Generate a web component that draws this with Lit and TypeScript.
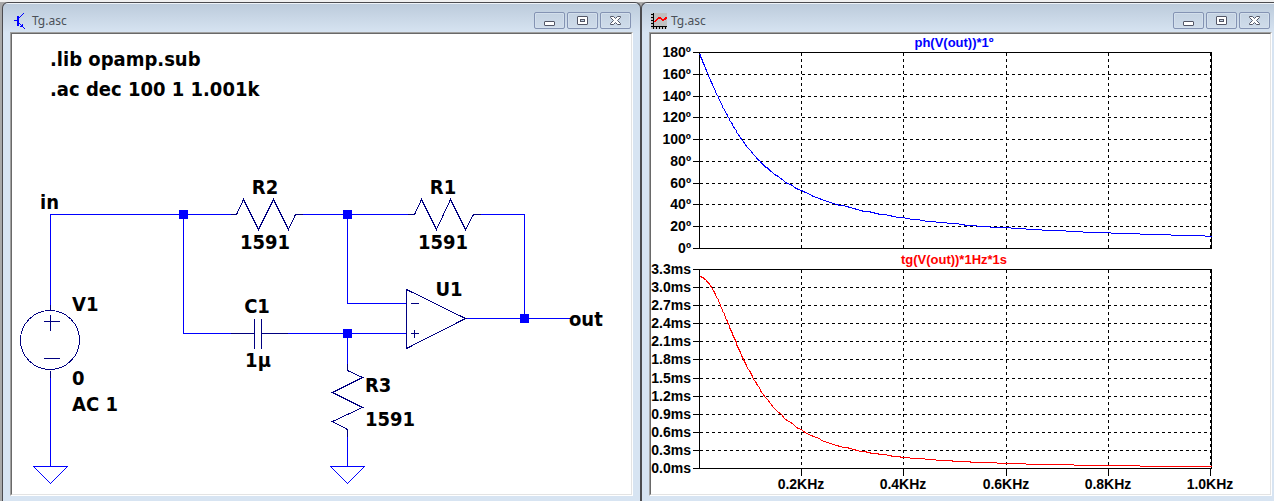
import { LitElement, html, svg, css } from "lit";
import { customElement, property } from "lit/decorators.js";

@customElement("mdi-window")
class MdiWindow extends LitElement {
  @property() heading = "";

  static styles = css`
    :host {
      display: flex;
      flex-direction: column;
      box-sizing: border-box;
      min-width: 0;
      border: 1px solid #4b4b4f;
      border-bottom: 0;
      border-radius: 6px 6px 0 0;
      padding: 0 7px 5px;
      background: linear-gradient(#eef3f8 0 1px, #bccbdb 1px, #d7e4f2 30px);
    }
    :host([clipped]) {
      border-right: 0;
      border-top-right-radius: 0;
      padding-right: 2px;
    }
    .bar {
      display: flex;
      align-items: center;
      height: 29px;
      flex: none;
    }
    .icon {
      display: flex;
      width: 16px;
      height: 16px;
      margin: 6px 4px 0 2px;
    }
    .title {
      flex: 1;
      margin: 6px 0 0;
      font: 12px/16px "Noto Sans", "Open Sans", sans-serif;
      color: #4a5058;
    }
    .buttons {
      display: flex;
      gap: 2px;
      margin: 6px 2px 0 0;
    }
    button {
      display: flex;
      align-items: center;
      justify-content: center;
      width: 31px;
      height: 17px;
      padding: 0;
      border: 1px solid #8493b3;
      border-radius: 2px;
      background: linear-gradient(#c4d2e2, #cfdcea);
      box-shadow: inset 0 0 0 1px #d3dfec;
    }
    .frame {
      display: flex;
      flex: 1;
      min-height: 0;
      border: 1px solid;
      border-color: #a0a0a0 #fff #fff #a0a0a0;
      background: #fff;
    }
    ::slotted(*) {
      flex: 1;
      min-width: 0;
      border: 1px solid;
      border-color: #696969 #e3e3e3 #e3e3e3 #696969;
    }
    ::slotted([slot="icon"]) {
      border: 0;
    }
  `;

  render() {
    return html`
      <div class="bar">
        <span class="icon"><slot name="icon"></slot></span>
        <h2 class="title">${this.heading}</h2>
        <div class="buttons">
          <button aria-label="Minimize">
            <svg width="13" height="13">
              <rect x="1.5" y="7.5" width="10" height="4" rx="0.5" fill="#fff" stroke="#535666" />
            </svg>
          </button>
          <button aria-label="Maximize">
            <svg width="13" height="13">
              <rect x="1.5" y="2.5" width="10" height="8" rx="0.5" fill="#fff" stroke="#535666" />
              <rect x="4.5" y="5.5" width="4" height="2" fill="#c4d2e2" stroke="#535666" />
            </svg>
          </button>
          <button aria-label="Close">
            <svg width="13" height="13">
              <path
                d="M1.5 2.5H4.5L6.5 4.5L8.5 2.5H11.5V3.5L8.5 6.5L11.5 9.5V10.5H8.5L6.5 8.5L4.5 10.5H1.5V9.5L4.5 6.5L1.5 3.5Z"
                fill="#fff"
                stroke="#535666"
              />
            </svg>
          </button>
        </div>
      </div>
      <div class="frame"><slot></slot></div>
    `;
  }
}

type Label = [text: string, x: number, y: number, anchor?: "middle"];

@customElement("circuit-schematic")
class CircuitSchematic extends LitElement {
  static styles = css`
    :host {
      display: flex;
    }
    svg {
      width: 100%;
      height: 100%;
    }
    .wire,
    .part {
      fill: none;
      stroke-width: 1px;
      shape-rendering: crispEdges;
    }
    .wire {
      stroke: #0000ff;
    }
    .part {
      stroke: #000080;
    }
    .node {
      fill: #0000ff;
    }
    text {
      font: bold 20px "DejaVu Sans Condensed", "DejaVu Sans", sans-serif;
      fill: #000;
    }
    .middle {
      text-anchor: middle;
    }
  `;

  private wires = [
    "M50 304V214H230",
    "M183 214V333H230",
    "M50 377V466M33 466H67L50 483Z",
    "M302 214H407",
    "M347 214V303H406",
    "M480 214H524V318",
    "M287 333H406",
    "M465 318H570",
    "M347 333V363",
    "M347 436V466M330 466H364L347 483Z",
  ];

  private parts = [
    "M50 304V310M50 370V377M43 321H59M50 314V330M43 358H59",
    "M230 214H236L243 199L258 229L273 199L288 229L295 214H302",
    "M407 214H414L421 199L436 229L450 199L465 229L473 214H480",
    "M230 333H254M254 318V348M261 318V348M261 333H287",
    "M347 363V370L362 377L332 392L362 407L332 421L347 429V436",
    "M406 289V348L465 318ZM410 303H418M410 333H418M414 329V337",
  ];

  private nodes = [
    [183, 214],
    [347, 214],
    [347, 333],
    [524, 318],
  ];

  private labels: Label[] = [
    [".lib opamp.sub", 50, 66],
    [".ac dec 100 1 1.001k", 50, 96],
    ["in", 40, 209],
    ["R2", 265, 194, "middle"],
    ["1591", 265, 249, "middle"],
    ["R1", 443, 194, "middle"],
    ["1591", 443, 249, "middle"],
    ["V1", 72, 311],
    ["0", 72, 385],
    ["AC 1", 72, 411],
    ["C1", 257, 313, "middle"],
    ["1µ", 258, 367, "middle"],
    ["U1", 449, 296, "middle"],
    ["R3", 365, 392],
    ["1591", 365, 426],
    ["out", 569, 326],
  ];

  render() {
    return html`
      <svg viewBox="12 34 619 460" preserveAspectRatio="xMinYMin">
        <g transform="translate(0.5 0.5)">
          ${this.wires.map((d) => svg`<path class="wire" d=${d} />`)}
          ${this.parts.map((d) => svg`<path class="part" d=${d} />`)}
          <circle class="part" cx="49.5" cy="339.5" r="29.5" />
        </g>
        ${this.nodes.map(
          ([x, y]) => svg`<rect class="node" x=${x - 4} y=${y - 4} width="9" height="9" />`,
        )}
        ${this.labels.map(
          ([text, x, y, anchor]) => svg`<text class=${anchor ?? ""} x=${x} y=${y}>${text}</text>`,
        )}
      </svg>
    `;
  }
}

interface Pane {
  title: string;
  kind: "phase" | "delay";
  top: number;
  bottom: number;
  max: number;
  ticks: string[];
  value: (hz: number) => number;
}

const LEFT = 699;
const RIGHT = 1211;
const CORNER_HZ = 100;
const toX = (hz: number) => LEFT + (hz - 1) * 0.512;

@customElement("wave-plot")
class WavePlot extends LitElement {
  static styles = css`
    :host {
      display: flex;
    }
    svg {
      width: 100%;
      height: 100%;
    }
    path {
      fill: none;
      stroke: #000;
      stroke-width: 1px;
      shape-rendering: crispEdges;
    }
    .grid {
      stroke-dasharray: 3 3;
    }
    .phase {
      stroke: #0000ff;
    }
    .delay {
      stroke: #ff0000;
    }
    text {
      font: bold 13px "Liberation Sans", Arial, sans-serif;
      fill: #000;
    }
    .y {
      font-size: 14px;
      text-anchor: end;
    }
    .x {
      font-size: 14px;
      text-anchor: middle;
    }
    .name {
      stroke: none;
      text-anchor: middle;
    }
    .name.phase {
      fill: #0000ff;
    }
    .name.delay {
      fill: #ff0000;
    }
  `;

  private panes: Pane[] = [
    {
      title: "ph(V(out))*1º",
      kind: "phase",
      top: 52,
      bottom: 248,
      max: 180,
      ticks: Array.from({ length: 10 }, (_, i) => `${180 - i * 20}º`),
      value: (hz) => (2 * Math.atan(CORNER_HZ / hz) * 180) / Math.PI,
    },
    {
      title: "tg(V(out))*1Hz*1s",
      kind: "delay",
      top: 269,
      bottom: 468,
      max: 3.3,
      ticks: Array.from({ length: 12 }, (_, i) => `${(3.3 - i * 0.3).toFixed(1)}ms`),
      value: (hz) => 1000 / (Math.PI * CORNER_HZ) / (1 + (hz / CORNER_HZ) ** 2),
    },
  ];

  private columns = [200, 400, 600, 800, 1000];

  private curve(pane: Pane) {
    const points: string[] = [];
    for (let i = 0; i <= 300; i++) {
      const hz = 10 ** (i / 100);
      const y = pane.bottom - (pane.value(hz) / pane.max) * (pane.bottom - pane.top);
      points.push(`${Math.round(toX(hz))} ${Math.round(y)}`);
    }
    return `M${points.join("L")}H${RIGHT}`;
  }

  private renderPane(pane: Pane) {
    const step = (pane.bottom - pane.top) / (pane.ticks.length - 1);
    const rows = pane.ticks.map((label, i) => ({ label, y: Math.round(pane.top + i * step) }));
    return svg`
      <g transform="translate(0.5 0.5)">
        ${rows.slice(1, -1).map(({ y }) => svg`<path class="grid" d="M${LEFT} ${y}H${RIGHT}" />`)}
        ${this.columns.map(
          (hz) => svg`<path class="grid" d="M${Math.round(toX(hz))} ${pane.top}V${pane.bottom}" />`,
        )}
        ${rows.map(({ y }) => svg`<path d="M692 ${y}H${LEFT}" />`)}
        <path d="M${LEFT} ${pane.top}H${RIGHT}V${pane.bottom}H${LEFT}Z" />
        <path class=${pane.kind} d=${this.curve(pane)} />
      </g>
      ${rows.map(({ label, y }) => svg`<text class="y" x="691" y=${y + 5}>${label}</text>`)}
      <text class="name ${pane.kind}" x="954" y=${pane.top - 5}>${pane.title}</text>
    `;
  }

  render() {
    return html`
      <svg viewBox="651 34 619 460" preserveAspectRatio="xMinYMin">
        ${this.panes.map((pane) => this.renderPane(pane))}
        <g transform="translate(0.5 0.5)">
          ${this.columns.map((hz) => svg`<path d="M${Math.round(toX(hz))} 468V475" />`)}
        </g>
        ${this.columns.map(
          (hz) => svg`<text class="x" x=${Math.round(toX(hz))} y="489">${(hz / 1000).toFixed(1)}KHz</text>`,
        )}
      </svg>
    `;
  }
}

@customElement("app-root")
class AppRoot extends LitElement {
  static styles = css`
    :host {
      display: grid;
      grid-template-columns: minmax(0, 639fr) minmax(0, 633fr);
      box-sizing: border-box;
      height: 100vh;
      padding: 2px 0 0 2px;
      overflow: hidden;
      background: linear-gradient(#f0f0f0 0 2px, #a8a8a8 2px);
    }
    .glyph {
      width: 16px;
      height: 16px;
    }
  `;

  render() {
    return html`
      <mdi-window heading="Tg.asc">
        <svg class="glyph" slot="icon" viewBox="0 0 16 16" shape-rendering="crispEdges">
          <g fill="#0000ff">
            <rect x="5" y="3" width="2" height="10" />
            <rect x="2" y="7" width="3" height="1" />
            <rect x="7" y="4" width="1" height="1" />
            <rect x="8" y="3" width="1" height="1" />
            <rect x="9" y="2" width="1" height="1" />
            <rect x="10" y="1" width="1" height="1" />
            <rect x="11" y="0" width="1" height="1" />
            <rect x="7" y="10" width="1" height="1" />
            <rect x="8" y="11" width="1" height="1" />
            <rect x="8" y="13" width="3" height="1" />
            <rect x="9" y="12" width="2" height="1" />
            <rect x="10" y="11" width="1" height="3" />
            <rect x="11" y="14" width="1" height="1" />
            <rect x="12" y="15" width="1" height="1" />
          </g>
        </svg>
        <circuit-schematic></circuit-schematic>
      </mdi-window>
      <mdi-window heading="Tg.asc" clipped>
        <svg class="glyph" slot="icon" viewBox="0 0 16 16" shape-rendering="crispEdges">
          <rect width="16" height="16" fill="#c0c0c0" />
          <path
            d="M2.5 0V16M0 13.5H16M0 1.5H2M0 4.5H2M0 7.5H2M0 10.5H2M5.5 14V16M8.5 14V16M11.5 14V16M14.5 14V16"
            fill="none"
            stroke="#000"
          />
          <path
            d="M3 8H4V7H5V6H6V5H7V4H10V5H11V6H13V5H14V4H16V6H15V7H13V8H11V7H10V6H7V7H6V8H5V9H3Z"
            fill="#ff0000"
          />
        </svg>
        <wave-plot></wave-plot>
      </mdi-window>
    `;
  }
}
